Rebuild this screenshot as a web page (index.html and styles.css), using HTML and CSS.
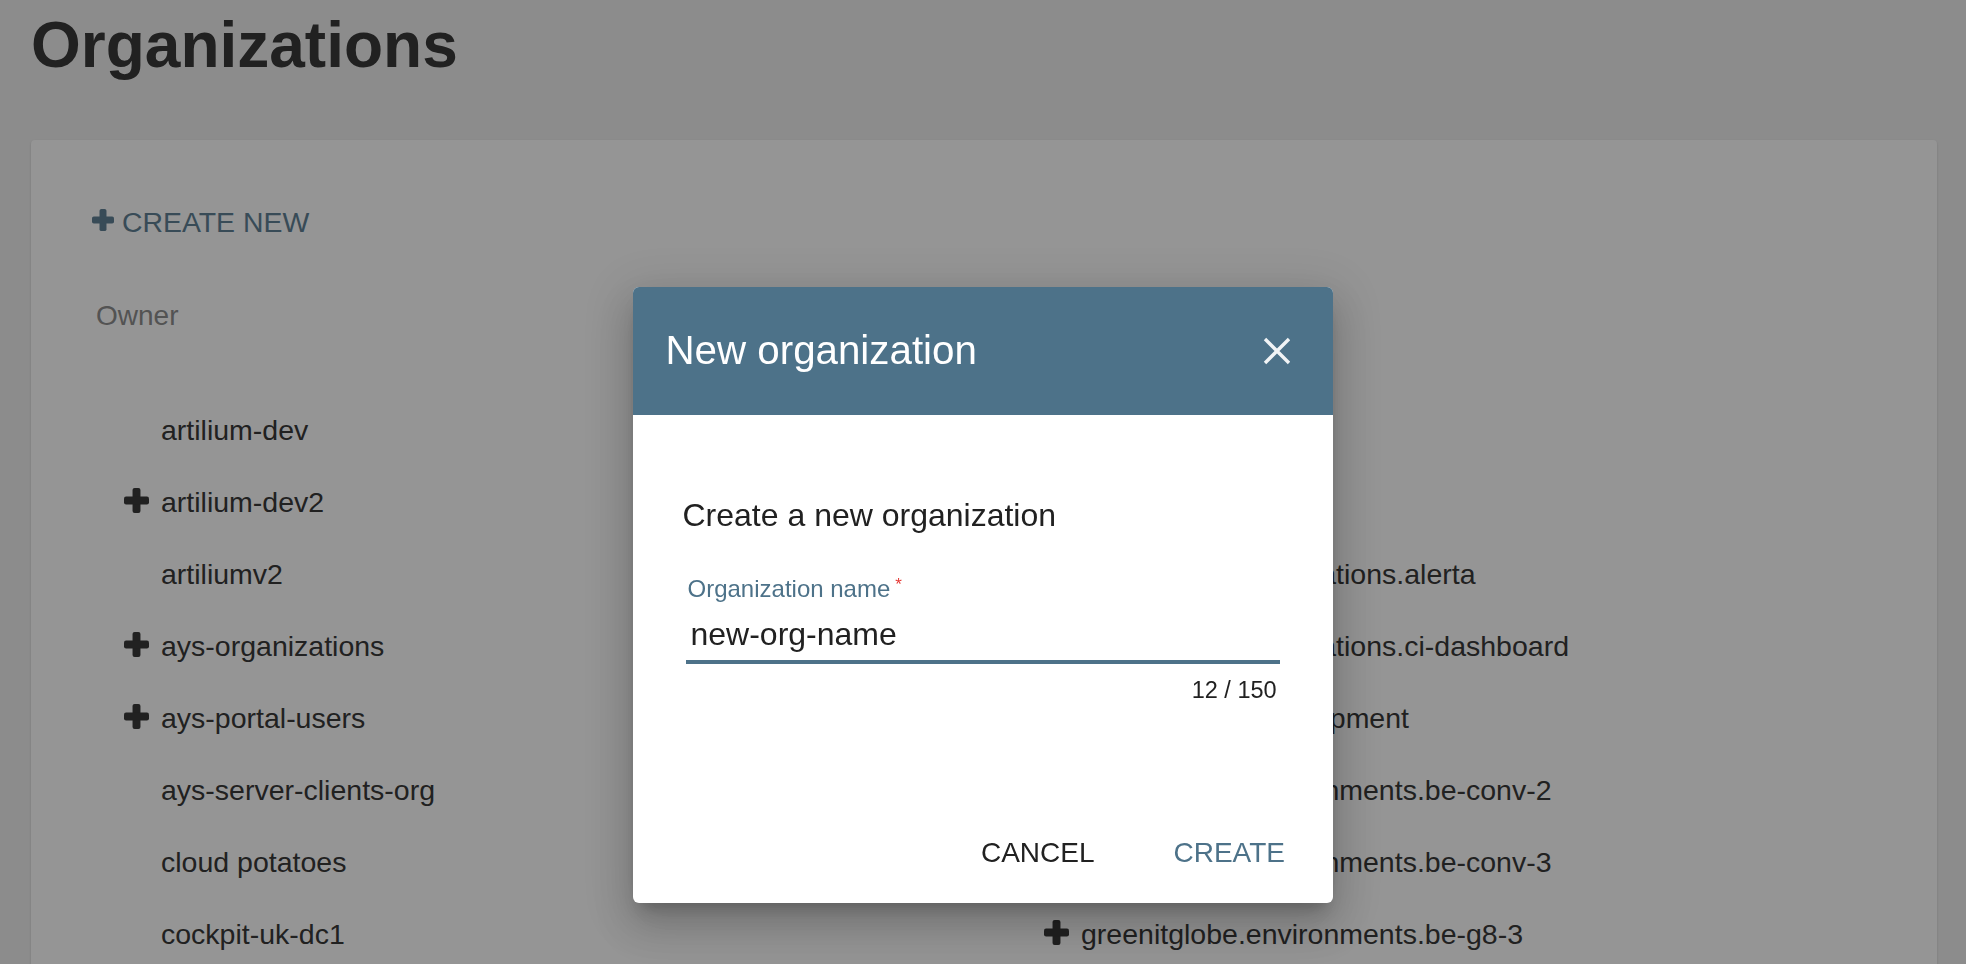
FILE: index.html
```html
<!DOCTYPE html>
<html lang="en">
<head>
<meta charset="utf-8">
<title>Organizations</title>
<link rel="stylesheet" href="styles.css">
</head>
<body>
<div class="page">
  <h1 class="page-title">Organizations</h1>
  <section class="card">
    <a class="create-new" href="#">
      <svg class="plus plus-sm" viewBox="0 0 24 24" aria-hidden="true"><rect x="8.2" y="0" width="7.6" height="24" rx="2"/><rect x="0" y="8.2" width="24" height="7.6" rx="2"/></svg>
      <span>Create new</span>
    </a>
    <div class="owner">Owner</div>
    <div class="tree">
      <ul class="tree-col">
        <li class="tree-row"><span class="toggle"></span><span class="name">artilium-dev</span></li>
        <li class="tree-row"><span class="toggle"><svg class="plus" viewBox="0 0 24 24"><rect x="8.2" y="0" width="7.6" height="24" rx="2"/><rect x="0" y="8.2" width="24" height="7.6" rx="2"/></svg></span><span class="name">artilium-dev2</span></li>
        <li class="tree-row"><span class="toggle"></span><span class="name">artiliumv2</span></li>
        <li class="tree-row"><span class="toggle"><svg class="plus" viewBox="0 0 24 24"><rect x="8.2" y="0" width="7.6" height="24" rx="2"/><rect x="0" y="8.2" width="24" height="7.6" rx="2"/></svg></span><span class="name">ays-organizations</span></li>
        <li class="tree-row"><span class="toggle"><svg class="plus" viewBox="0 0 24 24"><rect x="8.2" y="0" width="7.6" height="24" rx="2"/><rect x="0" y="8.2" width="24" height="7.6" rx="2"/></svg></span><span class="name">ays-portal-users</span></li>
        <li class="tree-row"><span class="toggle"></span><span class="name">ays-server-clients-org</span></li>
        <li class="tree-row"><span class="toggle"></span><span class="name">cloud potatoes</span></li>
        <li class="tree-row"><span class="toggle"></span><span class="name">cockpit-uk-dc1</span></li>
        <li class="tree-row"><span class="toggle"></span><span class="name">demo</span></li>
      </ul>
      <ul class="tree-col">
        <li class="tree-row"><span class="toggle"></span><span class="name">digital-me</span></li>
        <li class="tree-row"><span class="toggle"><svg class="plus" viewBox="0 0 24 24"><rect x="8.2" y="0" width="7.6" height="24" rx="2"/><rect x="0" y="8.2" width="24" height="7.6" rx="2"/></svg></span><span class="name">greenitglobe</span></li>
        <li class="tree-row"><span class="toggle"></span><span class="name">greenitglobe.applications.alerta</span></li>
        <li class="tree-row"><span class="toggle"></span><span class="name">greenitglobe.applications.ci-dashboard</span></li>
        <li class="tree-row"><span class="toggle"></span><span class="name">greenitglobe.development</span></li>
        <li class="tree-row"><span class="toggle"></span><span class="name">greenitglobe.environments.be-conv-2</span></li>
        <li class="tree-row"><span class="toggle"></span><span class="name">greenitglobe.environments.be-conv-3</span></li>
        <li class="tree-row"><span class="toggle"><svg class="plus" viewBox="0 0 24 24"><rect x="8.2" y="0" width="7.6" height="24" rx="2"/><rect x="0" y="8.2" width="24" height="7.6" rx="2"/></svg></span><span class="name">greenitglobe.environments.be-g8-3</span></li>
        <li class="tree-row"><span class="toggle"></span><span class="name">greenitglobe.environments.be-g8-4</span></li>
      </ul>
    </div>
  </section>
</div>

<div class="scrim"></div>

<div class="dialog-layer">
  <div class="dialog" role="dialog" aria-labelledby="dlg-title">
    <header class="dialog-header">
      <h2 class="dialog-title" id="dlg-title">New organization</h2>
      <button class="close-btn" type="button" aria-label="Close">
        <svg viewBox="0 0 28 28" width="28" height="28"><path d="M2 2L26 26M26 2L2 26"/></svg>
      </button>
    </header>
    <div class="dialog-body">
      <p class="dialog-lead">Create a new organization</p>
      <div class="field">
        <label class="field-label" for="org-name">Organization name<span class="req">*</span></label>
        <input class="field-input" id="org-name" type="text" value="new-org-name">
        <div class="field-counter">12 / 150</div>
      </div>
    </div>
    <div class="dialog-actions">
      <button class="btn btn-cancel" type="button">Cancel</button>
      <button class="btn btn-create" type="button">Create</button>
    </div>
  </div>
</div>
</body>
</html>
```

FILE: styles.css
```css
html, body {
  margin: 0;
  height: 100%;
  overflow: hidden;
}

body {
  background: #eeeeee;
  font-family: "Liberation Sans", Arial, sans-serif;
  color: #212121;
}

.page {
  padding: 14px 29px 0 31px;
}

.page-title {
  margin: 0;
  font-size: 64px;
  line-height: 63px;
  font-weight: 700;
  color: #212121;
}

.card {
  margin-top: 63px;
  background: #ffffff;
  border-radius: 4px;
  box-shadow: 0 2px 1px -1px rgba(0,0,0,.2), 0 1px 1px 0 rgba(0,0,0,.14), 0 1px 3px 0 rgba(0,0,0,.12);
  padding: 60px 61px 40px 61px;
}

.create-new {
  display: flex;
  align-items: center;
  gap: 8px;
  height: 44px;
  font-size: 28.4px;
  line-height: 44px;
  color: #4d7289;
  text-transform: uppercase;
  text-decoration: none;
}

.plus {
  display: block;
  fill: currentColor;
}

.plus-sm {
  width: 22px;
  height: 22px;
  margin-bottom: 4px;
}

.owner {
  margin: 50px 0 0 4px;
  height: 44px;
  font-size: 28px;
  line-height: 44px;
  color: #808080;
}

.tree {
  display: grid;
  grid-template-columns: 920px auto;
  margin: 56px 0 0 32px;
}

.tree-col {
  list-style: none;
  margin: 0;
  padding: 0;
}

.tree-row {
  display: flex;
  align-items: center;
  height: 72px;
  font-size: 28.5px;
  line-height: 72px;
  color: #212121;
  white-space: nowrap;
}

.toggle {
  flex: 0 0 25px;
  width: 25px;
  margin-right: 12px;
  color: #212121;
}

.toggle .plus {
  width: 25px;
  height: 25px;
  margin-bottom: 4px;
}

.scrim {
  position: fixed;
  inset: 0;
  background: rgba(33, 33, 33, 0.477);
}

.dialog-layer {
  position: fixed;
  inset: 0;
  display: flex;
  justify-content: center;
  align-items: flex-start;
  padding-top: 287px;
  box-sizing: border-box;
}

.dialog {
  width: 700px;
  background: #ffffff;
  border-radius: 6px;
  overflow: hidden;
  box-shadow: 0 11px 15px -7px rgba(0,0,0,.2), 0 24px 38px 3px rgba(0,0,0,.14), 0 9px 46px 8px rgba(0,0,0,.12);
}

.dialog-header {
  height: 128px;
  background: #4d7289;
  display: flex;
  align-items: center;
  justify-content: space-between;
  padding: 0 42px 0 32.5px;
  box-sizing: border-box;
}

.dialog-title {
  margin: 0;
  font-size: 40.3px;
  line-height: 40px;
  font-weight: 400;
  color: #ffffff;
}

.close-btn {
  display: block;
  width: 28px;
  height: 28px;
  padding: 0;
  border: 0;
  background: none;
  cursor: pointer;
}

.close-btn svg {
  display: block;
  fill: none;
  stroke: rgba(255,255,255,0.92);
  stroke-width: 3.4;
}

.dialog-body {
  padding: 84px 52.6px 0 49.5px;
}

.dialog-lead {
  margin: 0;
  font-size: 32px;
  line-height: 32px;
  color: #212121;
}

.field {
  margin: 46px 0 0 3.75px;
}

.field-label {
  display: block;
  padding-left: 1.25px;
  font-size: 24px;
  line-height: 24px;
  color: #4d7289;
}

.req {
  display: inline-block;
  margin-left: 5px;
  font-size: 17px;
  line-height: 17px;
  color: #e53935;
  vertical-align: top;
  position: relative;
  top: -1px;
}

.field-input {
  display: block;
  box-sizing: border-box;
  width: 100%;
  height: 46px;
  margin-top: 17px;
  padding: 0 0 10px 4.25px;
  border: 0;
  border-bottom: 4px solid #4d7289;
  outline: none;
  background: transparent;
  font-family: inherit;
  font-size: 32px;
  color: #212121;
}

.field-counter {
  margin-top: 15px;
  padding-right: 3.8px;
  font-size: 23.5px;
  line-height: 22px;
  text-align: right;
  color: #212121;
}

.dialog-actions {
  display: flex;
  justify-content: flex-end;
  gap: 23px;
  margin-top: 138px;
  padding: 0 20px 36.5px 0;
}

.btn {
  padding: 0 28px;
  border: 0;
  background: none;
  font-family: inherit;
  font-size: 28px;
  line-height: 27.5px;
  text-transform: uppercase;
  cursor: pointer;
}

.btn-cancel {
  color: #212121;
}

.btn-create {
  color: #4d7289;
}
```
